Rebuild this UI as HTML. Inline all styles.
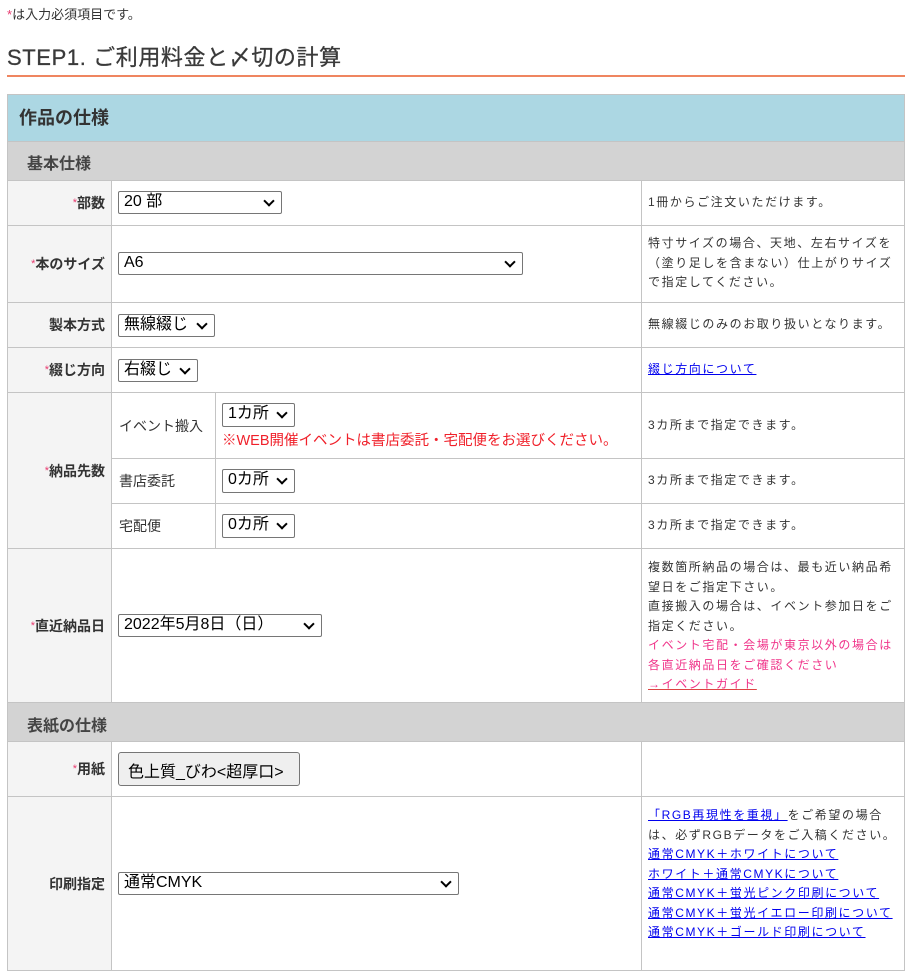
<!DOCTYPE html><html><head><meta charset="utf-8"><style>
*{box-sizing:border-box}
body{margin:0;width:915px;height:937px;overflow:hidden;background:#fff;font-family:"Liberation Sans","Noto Sans CJK JP",sans-serif;color:#333;position:relative}
div,span,a{position:absolute}
.c{background:#fff;border:1px solid #c4c4c4}
.l{background:#f4f4f4;border:1px solid #c4c4c4;font-size:14px;font-weight:bold;text-align:right;padding-right:6px;display:flex;align-items:center;justify-content:flex-end}
.l i{color:#e83a6f;font-style:normal;font-weight:normal;font-size:11px}
.s{border:1px solid #767676;border-radius:2px;background:#fff;font-size:16px;color:#000;padding-left:5px;line-height:20px}
.s:after{content:"";position:absolute;right:8px;top:5px;width:6px;height:6px;border-right:2px solid #000;border-bottom:2px solid #000;transform:rotate(45deg)}
.n{font-size:12px;letter-spacing:1.6px;line-height:19.5px;color:#333;left:648px}
.n a,.lk{position:static;color:#00e;text-decoration:underline}
.sub{font-size:14px;color:#333;display:flex;align-items:center;padding-left:7px}
</style></head><body>
<div style="left:7px;top:4px;font-size:13px;color:#333"><span style="position:static;color:#e83a6f">*</span>は入力必須項目です。</div>
<div style="left:7px;top:40px;font-size:22px;color:#3a3a3a;letter-spacing:0.6px;-webkit-text-stroke:0.3px #3a3a3a">STEP1. ご利用料金と〆切の計算</div>
<div style="left:7px;top:75px;width:898px;height:2px;background:#ef8560"></div>
<div style="left:7px;top:94px;width:898px;height:48px;background:#acd7e3;border:1px solid #c4c4c4;font-size:18px;font-weight:bold;padding:9px 0 0 11px;color:#333">作品の仕様</div>
<div style="left:7px;top:141px;width:898px;height:40px;background:#d3d3d3;border:1px solid #c4c4c4;font-size:16px;font-weight:bold;padding:8px 0 0 19px;color:#444">基本仕様</div>

<div class="l" style="left:7px;top:180px;width:105px;height:46px"><i>*</i>部数</div>
<div class="c" style="left:111px;top:180px;width:531px;height:46px"></div>
<div class="c" style="left:641px;top:180px;width:264px;height:46px"></div>
<div class="s" style="left:118px;top:191px;width:164px;height:23px">20 部</div>
<div class="n" style="top:193px">1冊からご注文いただけます。</div>

<div class="l" style="left:7px;top:225px;width:105px;height:78px"><i>*</i>本のサイズ</div>
<div class="c" style="left:111px;top:225px;width:531px;height:78px"></div>
<div class="c" style="left:641px;top:225px;width:264px;height:78px"></div>
<div class="s" style="left:118px;top:252px;width:405px;height:23px">A6</div>
<div class="n" style="top:234px;width:252px">特寸サイズの場合、天地、左右サイズを（塗り足しを含まない）仕上がりサイズで指定してください。</div>

<div class="l" style="left:7px;top:302px;width:105px;height:46px">製本方式</div>
<div class="c" style="left:111px;top:302px;width:531px;height:46px"></div>
<div class="c" style="left:641px;top:302px;width:264px;height:46px"></div>
<div class="s" style="left:118px;top:314px;width:97px;height:23px">無線綴じ</div>
<div class="n" style="top:315px">無線綴じのみのお取り扱いとなります。</div>

<div class="l" style="left:7px;top:347px;width:105px;height:46px"><i>*</i>綴じ方向</div>
<div class="c" style="left:111px;top:347px;width:531px;height:46px"></div>
<div class="c" style="left:641px;top:347px;width:264px;height:46px"></div>
<div class="s" style="left:118px;top:359px;width:80px;height:23px">右綴じ</div>
<div class="n" style="top:360px"><a class="lk">綴じ方向について</a></div>

<div class="l" style="left:7px;top:392px;width:105px;height:157px"><i>*</i>納品先数</div>
<div class="c sub" style="left:111px;top:392px;width:105px;height:67px">イベント搬入</div>
<div class="c" style="left:215px;top:392px;width:427px;height:67px"></div>
<div class="c" style="left:641px;top:392px;width:264px;height:67px"></div>
<div class="s" style="left:222px;top:403px;width:73px;height:24px">1カ所</div>
<div style="left:222px;top:429px;font-size:14.5px;color:#f0202a">※WEB開催イベントは書店委託・宅配便をお選びください。</div>
<div class="n" style="top:416px">3カ所まで指定できます。</div>
<div class="c sub" style="left:111px;top:458px;width:105px;height:46px">書店委託</div>
<div class="c" style="left:215px;top:458px;width:427px;height:46px"></div>
<div class="c" style="left:641px;top:458px;width:264px;height:46px"></div>
<div class="s" style="left:222px;top:469px;width:73px;height:24px">0カ所</div>
<div class="n" style="top:471px">3カ所まで指定できます。</div>
<div class="c sub" style="left:111px;top:503px;width:105px;height:46px">宅配便</div>
<div class="c" style="left:215px;top:503px;width:427px;height:46px"></div>
<div class="c" style="left:641px;top:503px;width:264px;height:46px"></div>
<div class="s" style="left:222px;top:514px;width:73px;height:24px">0カ所</div>
<div class="n" style="top:516px">3カ所まで指定できます。</div>

<div class="l" style="left:7px;top:548px;width:105px;height:155px"><i>*</i>直近納品日</div>
<div class="c" style="left:111px;top:548px;width:531px;height:155px"></div>
<div class="c" style="left:641px;top:548px;width:264px;height:155px"></div>
<div class="s" style="left:118px;top:614px;width:204px;height:23px">2022年5月8日（日）</div>
<div class="n" style="top:558px;width:252px">複数箇所納品の場合は、最も近い納品希望日をご指定下さい。<br>直接搬入の場合は、イベント参加日をご指定ください。<br><span style="position:static;color:#f0358a">イベント宅配・会場が東京以外の場合は各直近納品日をご確認ください</span><br><a style="color:#f0358a;text-decoration:underline;text-decoration-color:#d44">→イベントガイド</a></div>

<div style="left:7px;top:702px;width:898px;height:40px;background:#d3d3d3;border:1px solid #c4c4c4;font-size:16px;font-weight:bold;padding:9px 0 0 19px;color:#444">表紙の仕様</div>

<div class="l" style="left:7px;top:741px;width:105px;height:56px"><i>*</i>用紙</div>
<div class="c" style="left:111px;top:741px;width:531px;height:56px"></div>
<div class="c" style="left:641px;top:741px;width:264px;height:56px"></div>
<div style="left:118px;top:752px;width:182px;height:34px;background:#efefef;border:1px solid #767676;border-radius:3px;font-size:16px;color:#000;padding:5px 0 0 9px">色上質_びわ&lt;超厚口&gt;</div>

<div class="l" style="left:7px;top:796px;width:105px;height:175px">印刷指定</div>
<div class="c" style="left:111px;top:796px;width:531px;height:175px"></div>
<div class="c" style="left:641px;top:796px;width:264px;height:175px"></div>
<div class="s" style="left:118px;top:872px;width:341px;height:23px">通常CMYK</div>
<div class="n" style="top:806px;width:254px"><a>「RGB再現性を重視」</a>をご希望の場合は、必ずRGBデータをご入稿ください。<br><a>通常CMYK＋ホワイトについて</a><br><a>ホワイト＋通常CMYKについて</a><br><a>通常CMYK＋蛍光ピンク印刷について</a><br><a>通常CMYK＋蛍光イエロー印刷について</a><br><a>通常CMYK＋ゴールド印刷について</a></div>
</body></html>
